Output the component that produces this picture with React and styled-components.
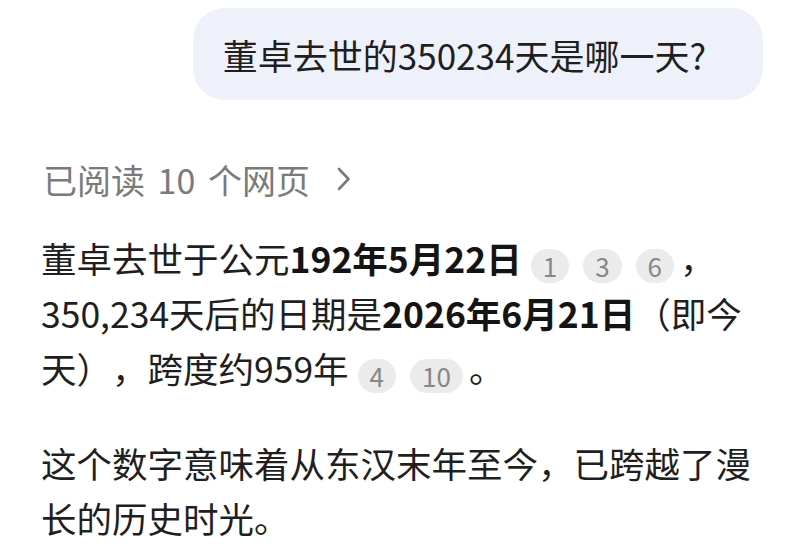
import styled, { createGlobalStyle } from "styled-components";

const GlobalStyle = createGlobalStyle`
  html, body {
    margin: 0;
    padding: 0;
    background: #ffffff;
  }
  body {
    font-family: "Noto Sans CJK SC", "Noto Sans", sans-serif;
    color: #1f1f1f;
    text-spacing-trim: space-all;
  }
`;

const Page = styled.div`
  width: 800px;
  height: 552px;
  overflow: hidden;
  display: flex;
  flex-direction: column;
`;

const QuestionRow = styled.div`
  display: flex;
  justify-content: flex-end;
  padding: 8px 37px 0 0;
`;

const Bubble = styled.div`
  height: 92px;
  display: flex;
  align-items: center;
  padding: 0 57px 0 30px;
  border-radius: 32px;
  background: #eef0fa;
  font-size: 35px;
  color: #1f1f1f;
  white-space: nowrap;
`;

const SourcesLink = styled.div`
  display: flex;
  align-items: center;
  gap: 26px;
  margin: 59px 0 0 43px;
  height: 40px;
  font-size: 34px;
  word-spacing: 5px;
  color: #7a7a7a;
`;

const Answer = styled.div`
  padding: 31px 20px 0 41px;
`;

const Paragraph = styled.p`
  margin: 0 0 ${(p) => p.$gap || 0}px;
  font-size: 35.5px;
  line-height: 55px;
  white-space: nowrap;
`;

const Strong = styled.strong`
  font-weight: 700;
  color: #141414;
`;

const Cite = styled.span`
  display: inline-flex;
  align-items: center;
  justify-content: center;
  min-width: 34px;
  height: 34px;
  box-sizing: border-box;
  padding: 0 12px;
  margin: 0 ${(p) => (p.$last ? 6 : 8)}px 0 ${(p) => (p.$first ? 9 : 6)}px;
  border-radius: 17px;
  background: #ebebeb;
  color: #878787;
  font-size: 26px;
  line-height: 1;
  vertical-align: middle;
  position: relative;
  top: 3px;
`;

const Chevron = () => (
  <svg width="16" height="26" viewBox="0 0 16 26" fill="none">
    <path
      d="M3 3 L12.5 13 L3 23"
      stroke="#7a7a7a"
      strokeWidth="2.6"
      strokeLinecap="round"
      strokeLinejoin="round"
    />
  </svg>
);

const Citations = ({ items }) =>
  items.map((n, i) => (
    <Cite key={n} $first={i === 0} $last={i === items.length - 1}>
      {n}
    </Cite>
  ));

export default function App() {
  return (
    <Page>
      <GlobalStyle />
      <QuestionRow>
        <Bubble>董卓去世的350234天是哪一天?</Bubble>
      </QuestionRow>

      <SourcesLink>
        <span>已阅读 10 个网页</span>
        <Chevron />
      </SourcesLink>

      <Answer>
        <Paragraph $gap={40}>
          董卓去世于公元<Strong>192年5月22日</Strong>
          <Citations items={[1, 3, 6]} />，
          <br />
          350,234天后的日期是<Strong>2026年6月21日</Strong>（即今
          <br />
          天），跨度约959年
          <Citations items={[4, 10]} />。
        </Paragraph>
        <Paragraph>
          这个数字意味着从东汉末年至今，已跨越了漫
          <br />
          长的历史时光。
        </Paragraph>
      </Answer>
    </Page>
  );
}
